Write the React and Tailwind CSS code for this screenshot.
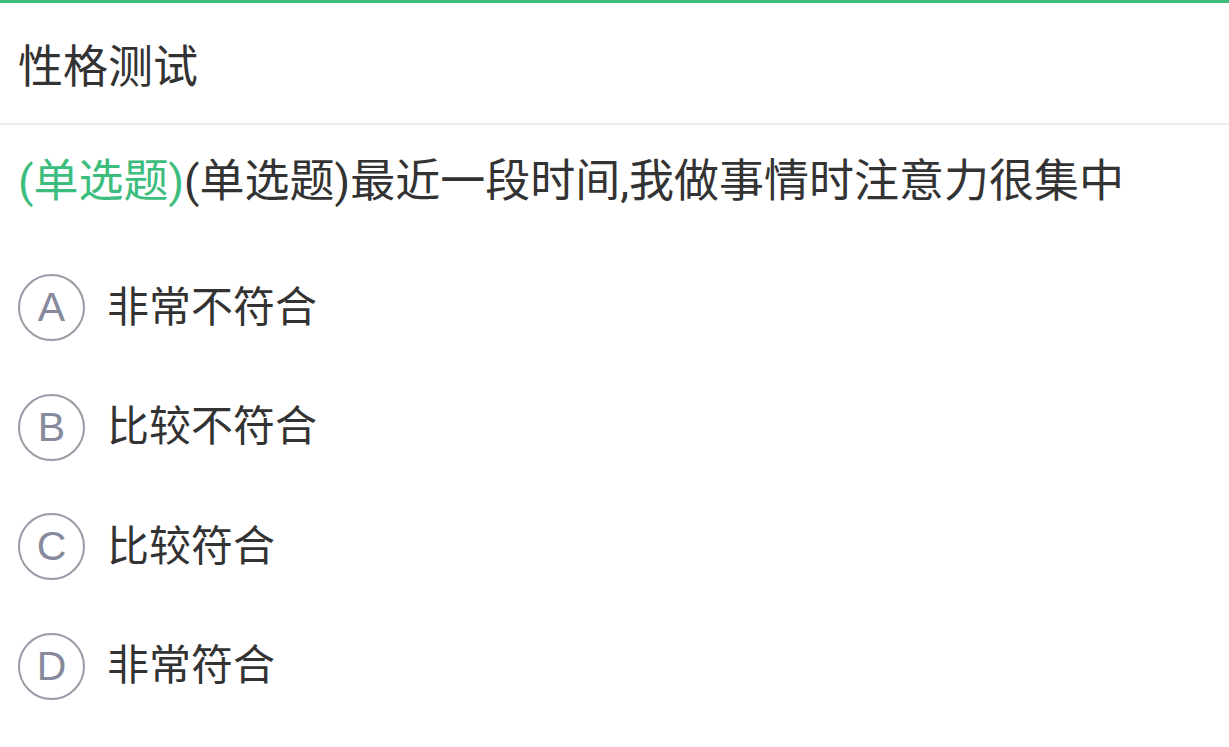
import React from 'react'

const options = [
  { key: 'A', label: '非常不符合' },
  { key: 'B', label: '比较不符合' },
  { key: 'C', label: '比较符合' },
  { key: 'D', label: '非常符合' },
]

const font = { fontFamily: 'Roboto, "Noto Sans CJK SC", sans-serif' }

export default function App() {
  return (
    <div className="min-h-screen bg-white text-[#333333]" style={font}>
      <div className="h-[3px] bg-[#3dbd7d]" />
      <div className="h-[122px] flex items-center pt-[9px] px-[18px] border-b-2 border-[#ebebeb]">
        <h1 className="text-[45px] leading-none">性格测试</h1>
      </div>
      <div className="px-[18px] pt-[29px]">
        <p className="text-[45px] leading-[56px]">
          <span className="text-[#3dbd7d]">(单选题)</span>(单选题)最近一段时间,我做事情时注意力很集中
        </p>
        <ul className="mt-[64px] flex flex-col gap-[52.5px]">
          {options.map((o) => (
            <li key={o.key} className="flex items-center h-[67px]">
              <span
                className="w-[67px] h-[67px] rounded-full border-2 border-[#9b9ba8] flex items-center justify-center text-[41px] leading-none text-[#868a9c]"
                style={{ fontFamily: '"Liberation Sans", Arial, sans-serif' }}
              >
                {o.key}
              </span>
              <span className="ml-[22px] text-[42px] leading-none">{o.label}</span>
            </li>
          ))}
        </ul>
      </div>
    </div>
  )
}
